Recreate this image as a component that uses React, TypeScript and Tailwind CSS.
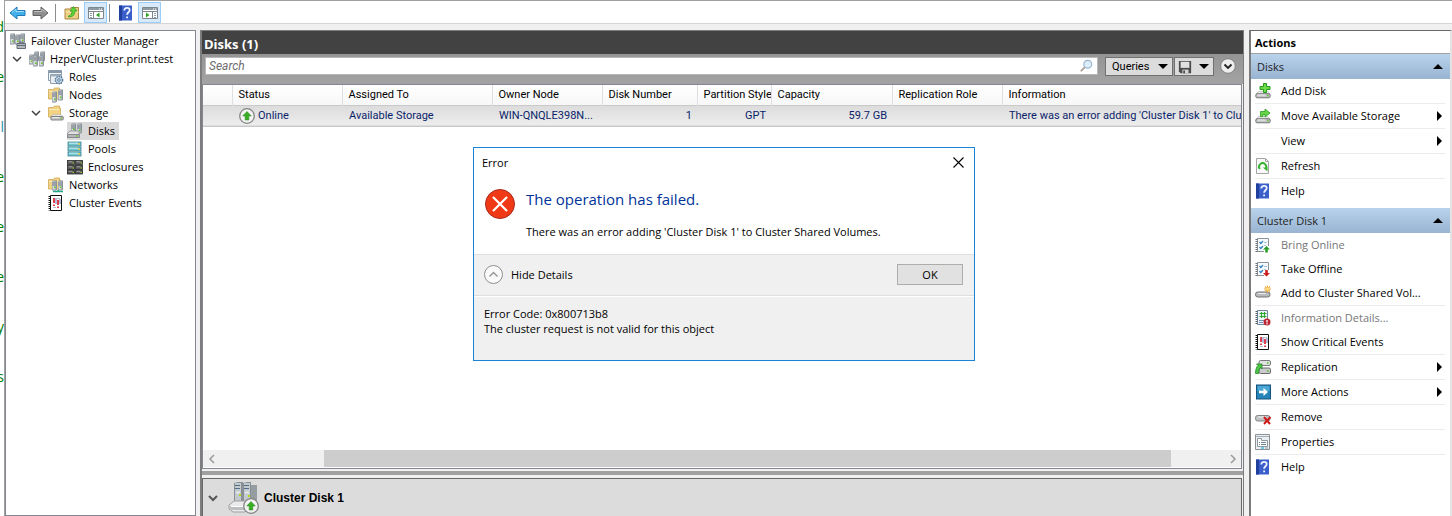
import { useState } from "react";
import type { ReactNode } from "react";
import clsx from "clsx";

/* ---------- icons ---------- */

interface IconProps {
  children: ReactNode;
  className?: string;
  viewBox?: string;
}

function Icon({ children, className = "w-4 h-4", viewBox = "0 0 16 16" }: IconProps) {
  return (
    <svg viewBox={viewBox} className={clsx("shrink-0", className)} aria-hidden="true" fill="none">
      {children}
    </svg>
  );
}

// one server tower, reused by most of the cluster icons
function Tower({ x, y, h = 10 }: { x: number; y: number; h?: number }) {
  return (
    <g transform={`translate(${x} ${y})`}>
      <path d={`M0 1.5 1 .5h4v${h}l-1 1H0z`} fill="#8b9299" />
      <path d={`M.5 1.5h3v${h - 1}h-3z`} fill="#d5dade" />
      <path d="M.5 3h3M.5 5h3" stroke="#5e6a75" />
      <path d={`M2 ${h - 2.5}h1.5v1.5H2z`} fill="#5fc71a" />
    </g>
  );
}

function Drive({ y = 8 }: { y?: number }) {
  return (
    <g transform={`translate(0 ${y})`}>
      <path d="M3.5.5h9L15 3H1z" fill="#e6e6e6" stroke="#b0b0b0" strokeWidth=".6" />
      <rect x=".8" y="2.8" width="14.4" height="4" rx="1.4" fill="#c2c4c5" stroke="#68696b" strokeWidth=".9" />
      <path d="M2.5 4h8" stroke="#f4f4f4" />
      <path d="M12 4h1.5v1.5H12z" fill="#63c927" />
    </g>
  );
}

function Folder() {
  return (
    <>
      <path d="M.5 2.5h5l1-1.5h5v2h1v9H.5z" fill="#f2d384" stroke="#cda852" strokeWidth=".8" />
      <path d="M1 4.5h10" stroke="#fbebbc" />
    </>
  );
}

const ServersIcon = () => (
  <Icon>
    <Tower x={0} y={0} />
    <Tower x={5} y={1} h={9} />
    <Tower x={10} y={0} h={9} />
    <path d="M7 10.5h8.5v5H7z" fill="#b4bac0" stroke="#626c75" />
    <path d="M10 10.5V9h3v1.5M7 12.5h8" stroke="#626c75" />
  </Icon>
);

const ClusterIcon = () => (
  <Icon>
    <Tower x={5} y={0} h={9} />
    <Tower x={11} y={0} h={9} />
    <Tower x={0} y={3} h={9} />
    <Tower x={4} y={4} />
    <Tower x={10} y={4} />
  </Icon>
);

const RolesIcon = () => (
  <Icon>
    <path d="M.5 1.5h13v10H.5z" fill="#f4f7fa" stroke="#8a9aa9" />
    <path d="M1 2h12v2H1z" fill="#8597a8" />
    <path d="M2.5 5.5h11v9h-11z" fill="#e9eef3" stroke="#93a2af" />
    <path d="M3 6h10v1.5H3z" fill="#a1b2c1" />
    <circle cx="11" cy="11" r="3.6" fill="#c9def0" stroke="#557895" strokeDasharray="1.5 .8" strokeWidth="1.5" />
    <circle cx="11" cy="11" r="1.3" fill="#fff" stroke="#557895" />
  </Icon>
);

const NodesIcon = () => (
  <Icon>
    <Folder />
    <Tower x={4} y={4} />
    <Tower x={10} y={2} />
  </Icon>
);

const StorageIcon = () => (
  <Icon>
    <Folder />
    <g transform="translate(2 2) scale(.88)">
      <Drive />
    </g>
  </Icon>
);

const DisksIcon = () => (
  <Icon>
    <Tower x={4} y={0} h={8} />
    <Tower x={10} y={0} h={9} />
    <path d="m3 8-3 3v3h9l3-3V8z" fill="#e1e1e1" stroke="#87898c" strokeWidth=".8" />
    <path d="M.5 11.5h12v3H.5z" fill="#b5b7b9" stroke="#77797b" strokeWidth=".8" />
    <path d="M9 12.5h2v1H9z" fill="#63c927" />
  </Icon>
);

const PoolsIcon = () => (
  <Icon>
    {[1, 6, 11].map((y) => (
      <g key={y}>
        <rect x="1" y={y} width="13" height="4" fill="#76c6d2" stroke="#39838e" strokeWidth=".8" />
        <path d={`M2 ${y + 1.2}h9`} stroke="#c6f0f5" />
        <path d={`M12 ${y + 1}v2`} stroke="#f5d33b" strokeWidth="1.4" />
      </g>
    ))}
  </Icon>
);

const EnclosuresIcon = () => (
  <Icon>
    {[1.5, 6.5, 11].map((y) =>
      [0.5, 8.5].map((x) => (
        <g key={`${x}-${y}`}>
          <rect x={x} y={y} width="7" height="4" fill="#575757" stroke="#292929" strokeWidth=".8" />
          <path d={`M${x + 1} ${y + 1.3}h4`} stroke="#b9b9b9" strokeWidth=".8" />
          <path d={`M${x + 5} ${y + 2}h1.5v1H${x + 5}z`} fill="#93d11f" />
        </g>
      ))
    )}
  </Icon>
);

const NetworksIcon = () => (
  <Icon>
    <Folder />
    <Tower x={4} y={3} h={9} />
    <Tower x={10} y={3} h={9} />
    <path d="M5 14.5h10M10 13v2" stroke="#22a886" strokeWidth="1.5" />
  </Icon>
);

const EventsIcon = () => (
  <Icon>
    <path d="M2.5.5h11v15h-11z" fill="#fff" stroke="#111" />
    <path d="M1.5 1v14.5" stroke="#111" strokeWidth="2" strokeDasharray="1 1" />
    <path d="M6 3v5M6 9.5V11" stroke="#d81e2d" strokeWidth="1.7" />
    <path d="M10 5v5M10 11.5V13" stroke="#d81e2d" strokeWidth="1.7" />
    <path d="M8 3v6M12 4v5" stroke="#4754a4" strokeWidth=".8" />
    <path d="M5 12.5h3M9 3.5h3" stroke="#9a9fb5" strokeWidth=".7" />
  </Icon>
);

const AddDiskIcon = () => (
  <Icon>
    <Drive />
    <path d="M8.5.5h3v3H15v3h-3.5v3h-3v-3H5v-3h3.5z" fill="#6bdb4c" stroke="#219b18" />
  </Icon>
);

const MoveIcon = () => (
  <Icon>
    <Drive />
    <path d="M5.5 8.5v-5H10V1l5 4-5 4V6.5H8v2z" fill="#67d44a" stroke="#2a9d20" strokeWidth=".8" />
  </Icon>
);

const RefreshIcon = () => (
  <Icon>
    <path d="M1.5.5h9l3 3v12h-12z" fill="#fafafa" stroke="#a4a4a4" />
    <path d="M10.5.5v3h3" stroke="#a4a4a4" />
    <path d="M4.8 11a3.6 3.6 0 1 1 5.7 0" stroke="#33b12c" strokeWidth="1.9" />
    <path d="M8 9.5h4.5v4z" fill="#33b12c" />
  </Icon>
);

const HelpIcon = () => (
  <Icon>
    <path d="M1 .5h13v15H1z" fill="#3a5fcb" />
    <path d="M1 .5h3v15H1z" fill="#213f9c" />
    <path d="M6.300 5.400c0-3.600 5.400-3.300 5.400-.3 0 2.100-2.600 2.200-2.600 4.600" stroke="#eef3ff" strokeWidth="1.8" />
    <path d="M8.200 11.500H10v1.800H8.200z" fill="#eef3ff" />
  </Icon>
);

function Checklist() {
  return (
    <>
      <path d="M2.5 1.5h11v13h-11z" fill="#f7fafc" stroke="#8c949b" />
      <path d="M1.5 2v13" stroke="#666c72" strokeWidth="2" strokeDasharray="1 1" />
      <path d="m4.5 5 1.3 1.5L8 4M4.5 10l1.3 1.5L8 9" stroke="#2e7dbd" strokeWidth="1.2" />
      <path d="M9 5.5h3M9 8.5h2" stroke="#a6c5db" />
    </>
  );
}

const BringOnlineIcon = () => (
  <Icon>
    <Checklist />
    <path d="M9 9h7v7H9z" fill="#fff" />
    <path d="m11.5 9 3.5 3.500h-2.200v3h-2.600v-3H8z" fill="#2c9c28" />
  </Icon>
);

const TakeOfflineIcon = () => (
  <Icon>
    <Checklist />
    <path d="M9 9h7v7H9z" fill="#fff" />
    <path d="M11.500 15.500 8 12h2.200V9h2.600v3H15z" fill="#cf2020" />
  </Icon>
);

const SharedVolumeIcon = () => (
  <Icon>
    <rect x=".5" y="7" width="14.5" height="5" rx="2.2" fill="#b8babc" stroke="#717375" />
    <path d="M3 8.5h8" stroke="#ededed" />
    <path d="M12.5.5v7M9 4h7M10 1.5l5 5M15 1.5l-5 5" stroke="#eba73d" strokeWidth="1.1" />
    <circle cx="12.5" cy="4" r="1.7" fill="#ffdc7b" />
  </Icon>
);

const InfoDetailsIcon = () => (
  <Icon>
    <path d="M2.5.5h10v14h-10z" fill="#eef4fa" stroke="#6c879f" />
    <path d="M1.5 1v14" stroke="#585d62" strokeWidth="2" strokeDasharray="1 1" />
    <path d="M6.5 2v6M9.5 2v6M4.5 3.5h7M4.5 6.5h7" stroke="#2fa62f" strokeWidth="1.2" />
    <path d="M4 10.5h5M4 12.5h4" stroke="#6e91bb" />
    <circle cx="12" cy="12" r="3.5" fill="#bf2634" />
    <path d="M12 10v2.5M12 13.3v1.2" stroke="#fff" strokeWidth="1.3" />
  </Icon>
);

const ReplicationIcon = () => (
  <Icon>
    <rect x="4" y="1.5" width="11.5" height="5" rx="1.5" fill="#dfe1e2" stroke="#797b7d" />
    <rect x="4" y="9" width="11.5" height="5.5" rx="1.5" fill="#c8cacc" stroke="#696b6d" />
    <path d="M12 4h1.5M12 12h1.5" stroke="#4ebd20" strokeWidth="1.5" />
    <path d="M.5 14.5C.5 10.500 1.500 8 3 6.500L1.500 5H7v5L5.500 8.500C4 10 3.500 11.500 3.500 14.500z" fill="#4cc845" stroke="#23882a" strokeWidth=".8" />
  </Icon>
);

const MoreActionsIcon = () => (
  <Icon>
    <rect x="1.5" y="1" width="14" height="14" fill="#2583b8" stroke="#14557f" />
    <path d="M2.5 2h12v5h-12z" fill="#4ba7d5" />
    <path d="M4 6.700h4.500V4L13 8l-4.500 4V9.300H4z" fill="#fff" />
  </Icon>
);

const RemoveIcon = () => (
  <Icon>
    <rect x=".5" y="6.5" width="14.5" height="5.5" rx="2.2" fill="#c0c2c4" stroke="#818385" />
    <path d="M3 8h8" stroke="#f2f2f2" />
    <path d="m9 8 6 7M15.500 8 9 15" stroke="#d01919" strokeWidth="2" />
  </Icon>
);

const PropertiesIcon = () => (
  <Icon>
    <path d="M.5.5h14v15H.5z" fill="#eceff1" stroke="#8b9195" />
    <path d="M1 2.5h13" stroke="#a6adb3" />
    <path d="M2.5 4.5h4v2h6v6h-10z" fill="#fff" stroke="#8e99a2" />
    <path d="M4 8.5h1M6 8.5h5M4 10.5h1M6 10.5h5" stroke="#718596" />
    <path d="M6 14h3" stroke="#27bad8" strokeWidth="1.3" />
    <path d="M10 14h3" stroke="#949a9e" />
  </Icon>
);

function PaneIcon({ side }: { side: "left" | "right" }) {
  return (
    <Icon>
      <path d="M.5 2.5h15v11H.5z" fill="#fff" stroke="#7c868f" />
      <path d="M1 3h14v2H1z" fill="#8f9aa4" />
      <path d="M1 6.5h14" stroke="#7c868f" />
      <path d="M11 4h1M13 4h1" stroke="#fff" />
      {side === "left" ? (
        <>
          <path d="M5.5 7v7" stroke="#7c868f" />
          <path d="M2 8.5h2M2 10.5h2M2 12.5h2" stroke="#8ca0b3" />
          <path d="M11.5 7.5v5L8 10z" fill="#2ea424" />
        </>
      ) : (
        <>
          <path d="M10.5 7v7" stroke="#7c868f" />
          <path d="M12 8.5h2M12 10.5h2M12 12.5h2" stroke="#8ca0b3" />
          <path d="M4 7.5v5L7.5 10z" fill="#2ea424" />
        </>
      )}
    </Icon>
  );
}

const FolderUpIcon = () => (
  <Icon>
    <path d="M1 4h5l1-1.5h7.5V14H1z" fill="#efcf83" stroke="#ad8742" />
    <path d="M1.5 7h13" stroke="#f9e6af" />
    <path d="M4.500 11c2.500-.5 3.500-2.500 3.500-5H6l3.500-4.500L13 6h-2c0 4-2.500 6-6.500 6z" fill="#5fd438" stroke="#2a9323" strokeWidth=".7" />
  </Icon>
);

const BackIcon = () => (
  <Icon className="w-[17px] h-4" viewBox="0 0 17 16">
    <path d="M1 8 8 2v3.5h8v5H8V14z" fill="#43b0e9" stroke="#2179b8" />
    <path d="m3 7.5 4-3.300V6.500h8" stroke="#a2def8" />
  </Icon>
);

const ForwardIcon = () => (
  <Icon className="w-[17px] h-4" viewBox="0 0 17 16">
    <path d="M16 8 9 2v3.5H1v5h8V14z" fill="#8f8f8f" stroke="#626262" />
    <path d="M2 6.5h8V4.200l4 3.300" stroke="#bcbcbc" />
  </Icon>
);

function OnlineBadge() {
  return (
    <>
      <circle cx="8" cy="8" r="7.3" fill="#f3f3f3" stroke="#858585" strokeWidth="1.3" />
      <path d="m8 3.500 4.300 4.500H9.800v4H6.200V8H3.700z" fill="#38ae25" stroke="#258618" strokeWidth=".5" />
    </>
  );
}

function Chevron({ className = "" }: { className?: string }) {
  return (
    <svg viewBox="0 0 10 10" fill="none" aria-hidden="true" className={clsx("w-2.5 h-2.5 shrink-0", className)}>
      <path d="m1 3 4 4 4-4" stroke="currentColor" strokeWidth="1.5" />
    </svg>
  );
}

/* ---------- data ---------- */

interface Action {
  label: string;
  icon?: ReactNode;
  submenu?: boolean;
  disabled?: boolean;
  divider?: boolean;
}

const diskActions: Action[] = [
  { label: "Add Disk", icon: <AddDiskIcon />, divider: true },
  { label: "Move Available Storage", icon: <MoveIcon />, submenu: true, divider: true },
  { label: "View", submenu: true, divider: true },
  { label: "Refresh", icon: <RefreshIcon />, divider: true },
  { label: "Help", icon: <HelpIcon /> },
];

const clusterDiskActions: Action[] = [
  { label: "Bring Online", icon: <BringOnlineIcon />, disabled: true },
  { label: "Take Offline", icon: <TakeOfflineIcon /> },
  { label: "Add to Cluster Shared Vol...", icon: <SharedVolumeIcon />, divider: true },
  { label: "Information Details...", icon: <InfoDetailsIcon />, disabled: true },
  { label: "Show Critical Events", icon: <EventsIcon />, divider: true },
  { label: "Replication", icon: <ReplicationIcon />, submenu: true, divider: true },
  { label: "More Actions", icon: <MoreActionsIcon />, submenu: true, divider: true },
  { label: "Remove", icon: <RemoveIcon />, divider: true },
  { label: "Properties", icon: <PropertiesIcon />, divider: true },
  { label: "Help", icon: <HelpIcon /> },
];

const columns = [
  { label: "", width: "w-[29px]" },
  { label: "Status", width: "w-[110px]" },
  { label: "Assigned To", width: "w-[150px]" },
  { label: "Owner Node", width: "w-[110px]" },
  { label: "Disk Number", width: "w-[95px]" },
  { label: "Partition Style", width: "w-[74px]" },
  { label: "Capacity", width: "w-[121px]" },
  { label: "Replication Role", width: "w-[110px]" },
  { label: "Information", width: "" },
];

const editorLetters = ["d", "e", "l", "e", "e", "e", "y", "s"];

/* ---------- parts ---------- */

function Toolbar() {
  return (
    <div className="h-6 flex items-center bg-white border-y border-t-[#a0a0a0] border-b-[#d5d5d5] pl-1 pt-px">
      <button aria-label="Back">
        <BackIcon />
      </button>
      <button aria-label="Forward" className="ml-1.5">
        <ForwardIcon />
      </button>
      <span className="w-px h-[18px] bg-[#8d8d8d] ml-1.5" />
      <button aria-label="Up one level" className="ml-2">
        <FolderUpIcon />
      </button>
      <button
        aria-label="Show console tree"
        className="ml-1 w-[23px] h-[21px] flex items-center justify-center bg-[#d8eaf9] border border-[#99cdf8]"
      >
        <PaneIcon side="left" />
      </button>
      <span className="w-px h-[18px] bg-[#8d8d8d] ml-0.5" />
      <button aria-label="Help" className="ml-2">
        <HelpIcon />
      </button>
      <button
        aria-label="Show action pane"
        className="ml-1 w-[23px] h-[21px] flex items-center justify-center bg-[#d8eaf9] border border-[#99cdf8]"
      >
        <PaneIcon side="right" />
      </button>
    </div>
  );
}

interface TreeItemProps {
  label: string;
  icon: ReactNode;
  expanded?: boolean;
  selected?: boolean;
  indent: string;
}

function TreeItem({ label, icon, expanded, selected, indent }: TreeItemProps) {
  return (
    <li className={clsx("flex items-center h-[18px]", indent)}>
      <span className="w-[17px] shrink-0 text-[#404040]">{expanded && <Chevron />}</span>
      <button
        className={clsx("flex items-center gap-[5px] h-[18px] pr-1 whitespace-nowrap", selected && "bg-[#d9d9d9]")}
      >
        {icon}
        {label}
      </button>
    </li>
  );
}

function ConsoleTree() {
  return (
    <nav aria-label="Console tree" className="w-[191px] shrink-0 bg-white border border-[#828790] pt-px">
      <ul>
        <li className="flex items-center h-[18px] pl-1">
          <button className="flex items-center gap-[5px] whitespace-nowrap">
            <ServersIcon />
            Failover Cluster Manager
          </button>
        </li>
        <TreeItem indent="pl-1.5" expanded icon={<ClusterIcon />} label="HzperVCluster.print.test" />
        <TreeItem indent="pl-[25px]" icon={<RolesIcon />} label="Roles" />
        <TreeItem indent="pl-[25px]" icon={<NodesIcon />} label="Nodes" />
        <TreeItem indent="pl-[25px]" expanded icon={<StorageIcon />} label="Storage" />
        <TreeItem indent="pl-11" selected icon={<DisksIcon />} label="Disks" />
        <TreeItem indent="pl-11" icon={<PoolsIcon />} label="Pools" />
        <TreeItem indent="pl-11" icon={<EnclosuresIcon />} label="Enclosures" />
        <TreeItem indent="pl-[25px]" icon={<NetworksIcon />} label="Networks" />
        <TreeItem indent="pl-[25px]" icon={<EventsIcon />} label="Cluster Events" />
      </ul>
    </nav>
  );
}

function DownTriangle() {
  return (
    <svg viewBox="0 0 10 5" className="w-2.5 h-[5px]" aria-hidden="true">
      <path d="M0 0h10L5 5z" fill="#000" />
    </svg>
  );
}

function SearchBar() {
  const [query, setQuery] = useState("");

  return (
    <div className="h-[30px] flex items-start pt-[3px] pl-[3px] pr-[7px] bg-gradient-to-b from-[#949494] to-[#a3a3a3]">
      <label className="flex-1 h-[18px] flex items-center bg-white border border-[#b8b8b8] pr-1">
        <input
          type="text"
          aria-label="Search"
          placeholder="Search"
          value={query}
          onChange={(e) => setQuery(e.target.value)}
          className="flex-1 min-w-0 h-4 px-[3px] text-[12px] outline-none placeholder:italic placeholder:text-[#6d6d6d]"
        />
        <Icon className="w-3.5 h-3.5">
          <path d="m2 14 5-5" stroke="#a39b91" strokeWidth="2" />
          <circle cx="10" cy="6" r="4.5" fill="#dceefa" stroke="#98b3cd" strokeWidth="1.3" />
        </Icon>
      </label>
      <button className="ml-[7px] w-[68px] h-[19px] flex items-center justify-between pl-1.5 pr-1 bg-[#dcdcdc] border border-[#707070]">
        Queries
        <DownTriangle />
      </button>
      <button
        aria-label="Save query"
        className="ml-px w-10 h-[19px] flex items-center justify-between pl-[3px] pr-1 bg-[#dcdcdc] border border-[#707070]"
      >
        <Icon className="w-3.5 h-3.5">
          <path d="M1 1h14v14H3l-2-2z" fill="#4c4c4c" />
          <path d="M3 2h10v7H3z" fill="#dfe1e3" />
          <path d="M5 11h7v4H5z" fill="#d6d6d6" />
          <path d="M6 12h2v3H6z" fill="#4c4c4c" />
        </Icon>
        <DownTriangle />
      </button>
      <button aria-label="Expand query" className="ml-1.5 mt-px">
        <Icon>
          <circle cx="8" cy="8" r="7.3" fill="#eee" stroke="#828282" />
          <path d="M4.500 6.500 8 10l3.500-3.500" stroke="#222" strokeWidth="1.9" />
        </Icon>
      </button>
    </div>
  );
}

function DiskTable() {
  const cell = "h-[21px] p-0 pl-[7px] overflow-hidden";
  const numberCell = "h-[21px] p-0 pr-[5px] text-right";

  return (
    <table className="w-full table-fixed border-collapse whitespace-nowrap">
      <colgroup>
        {columns.map((column, i) => (
          <col key={i} className={column.width} />
        ))}
      </colgroup>
      <thead>
        <tr className="h-5 bg-gradient-to-b from-white to-[#f7f7f8]">
          {columns.map((column, i) => (
            <th
              key={i}
              className="h-5 p-0 pl-1.5 text-left font-normal overflow-hidden border-r border-[#dedfe1] last:border-r-0"
            >
              {column.label}
            </th>
          ))}
        </tr>
      </thead>
      <tbody>
        <tr className="bg-gradient-to-b from-[#dcdcdc] to-[#ededed] border-y border-[#c9c9c9] text-[#0a246a]">
          <td className={cell} />
          <td className={cell}>
            <span className="flex items-center gap-[3px]">
              <Icon>
                <OnlineBadge />
              </Icon>
              Online
            </span>
          </td>
          <td className={cell}>Available Storage</td>
          <td className={cell}>WIN-QNQLE398N...</td>
          <td className={numberCell}>1</td>
          <td className={numberCell}>GPT</td>
          <td className={numberCell}>59.7 GB</td>
          <td className={cell} />
          <td className={cell}>There was an error adding 'Cluster Disk 1' to Cluster Shared Volumes.</td>
        </tr>
      </tbody>
    </table>
  );
}

function DisksPane() {
  return (
    <main className="flex-1 min-w-0 flex flex-col border-l-2 border-t border-r border-[#7d7d7d] bg-[#f0f0f0] font-[Roboto,sans-serif]">
      <h1 className="h-[23px] flex items-center pl-0.5 pt-0.5 bg-[#424242] text-white font-bold text-[13px] font-['Open_Sans',sans-serif]">
        Disks (1)
      </h1>
      <SearchBar />
      <section className="flex-1 flex flex-col bg-white border border-[#828790] mr-px pb-px">
        <DiskTable />
        {/* horizontal scrollbar */}
        <div className="mt-auto h-[17px] flex bg-[#f0f0f0] text-[#9a9a9a]">
          <button aria-label="Scroll left" className="w-[17px] flex items-center justify-center">
            <Chevron className="rotate-90" />
          </button>
          <div className="flex-1 flex">
            <span className="w-[104px]" />
            <span className="flex-1 bg-[#cdcdcd]" />
            <span className="w-[53px]" />
          </div>
          <button aria-label="Scroll right" className="w-[17px] flex items-center justify-center">
            <Chevron className="-rotate-90" />
          </button>
        </div>
      </section>
      <div className="h-1 mt-0.5 mb-[3px] bg-[#a0a0a0]" />
      <section className="h-[38px] flex items-center mr-px pl-[5px] bg-[#dcdcdc] border border-b-0 border-[#696969]">
        <Chevron className="text-[#555] [&_path]:stroke-2" />
        <Icon className="ml-2.5 w-8 h-8" viewBox="0 0 32 32">
          <path d="m6 1 4-1h5v22H6zM15 1l4-1h4v23h-8z" fill="#899096" />
          <path d="M7 1h6v20H7zM16 1h6v20h-6z" fill="#c3cacf" />
          <path d="M23 3h6v20h-6z" fill="#969da1" />
          <path d="M7 3.5h5M7 6.5h5M16 3.5h5M16 6.5h5" stroke="#526e82" />
          <path d="M8 10.5h4M17 10.5h4" stroke="#e3e7e9" strokeWidth="2" />
          <path d="M11 12h2v2h-2zM20 13h2v2h-2z" fill="#b6db19" />
          <path d="m6 19-5 4v4l4 3h12l5-5v-6z" fill="#eaeaea" stroke="#9d9fa1" />
          <path d="M1 24h17v4H3z" fill="#bcbec0" />
          <path d="M3 24.5h14" stroke="#fff" />
          <g transform="translate(15 16)">
            <OnlineBadge />
          </g>
        </Icon>
        <h2 className="ml-1 text-[12px] font-bold font-['Liberation_Sans',sans-serif]">Cluster Disk 1</h2>
      </section>
    </main>
  );
}

function ActionGroup({ title, actions }: { title: string; actions: Action[] }) {
  return (
    <section className="mb-[5px]">
      <button className="w-full h-[25px] flex items-center justify-between pl-1.5 pr-[7px] bg-gradient-to-b from-[#bad3ec] to-[#98b4d2] text-[#1e1e1e]">
        {title}
        <svg viewBox="0 0 10 5" className="w-2.5 h-[5px]" aria-hidden="true">
          <path d="M0 5h10L5 0z" fill="#000" />
        </svg>
      </button>
      <ul className="pl-1 pr-[5px]">
        {actions.map((action) => (
          <li key={action.label} className={clsx(action.divider && "border-b border-[#ececec]")}>
            <button
              disabled={action.disabled}
              className="w-full h-6 flex items-center gap-2.5 pr-[3px] text-left whitespace-nowrap disabled:text-[#777]"
            >
              <span className="w-4 shrink-0">{action.icon}</span>
              <span className="flex-1">{action.label}</span>
              {action.submenu && (
                <svg viewBox="0 0 5 10" className="w-[5px] h-2.5" aria-hidden="true">
                  <path d="M0 0v10l5-5z" fill="#000" />
                </svg>
              )}
            </button>
          </li>
        ))}
      </ul>
    </section>
  );
}

function ActionsPane() {
  return (
    <aside className="w-[203px] shrink-0 bg-white border-l-2 border-t border-r-2 border-l-[#7a7a7a] border-t-[#696969] border-r-[#e3e3e3]">
      <h2 className="h-[23px] flex items-center pl-1 pt-px font-bold border-b border-[#a0a0a0]">Actions</h2>
      <ActionGroup title="Disks" actions={diskActions} />
      <ActionGroup title="Cluster Disk 1" actions={clusterDiskActions} />
    </aside>
  );
}

function ErrorDialog() {
  return (
    <div
      role="dialog"
      aria-labelledby="error-title"
      className="absolute left-[473px] top-[147px] w-[502px] flex flex-col bg-white border border-[#1883d7]"
    >
      <div className="h-[30px] flex items-center justify-between pl-2 pr-2.5 pb-px">
        <span id="error-title">Error</span>
        <button aria-label="Close">
          <svg viewBox="0 0 11 11" className="w-[11px] h-[11px]" aria-hidden="true">
            <path d="m.5.5 10 10M10.5.5l-10 10" stroke="#000" strokeWidth="1.1" />
          </svg>
        </button>
      </div>
      <div className="h-[76px] flex pl-[11px] pt-[11px] gap-[11px]">
        <Icon className="w-[30px] h-[30px]" viewBox="0 0 30 30">
          <circle cx="15" cy="15" r="14.5" fill="#f03a17" stroke="#a62a18" />
          <path d="m8 8 14 14M22 8 8 22" stroke="#fff" strokeWidth="2.2" />
        </Icon>
        <div>
          <h2 className="text-[15px] leading-5 text-[#003399]">The operation has failed.</h2>
          <p className="mt-3 leading-[22px]">There was an error adding 'Cluster Disk 1' to Cluster Shared Volumes.</p>
        </div>
      </div>
      <div className="h-[41px] flex items-center justify-between pl-2.5 pr-[11px] pb-px bg-[#f0f0f0] border-t border-[#dfdfdf]">
        <button className="flex items-center gap-2">
          <Icon className="w-[19px] h-[19px]" viewBox="0 0 19 19">
            <circle cx="9.5" cy="9.5" r="9" fill="#fafafa" stroke="#8f8f8f" />
            <path d="m5.5 11.5 4-4 4 4" stroke="#999" strokeWidth="1.5" />
          </Icon>
          Hide Details
        </button>
        <button className="w-[66px] h-[21px] bg-[#e1e1e1] border border-[#adadad]">OK</button>
      </div>
      <div className="h-[65px] bg-[#f0f0f0] border-t border-[#dfdfdf]">
        <div className="border-t border-white pt-[9px] pl-2.5 leading-[15px]">
          <p>Error Code: 0x800713b8</p>
          <p>The cluster request is not valid for this object</p>
        </div>
      </div>
    </div>
  );
}

export default function App() {
  return (
    <div className="relative min-h-screen flex overflow-hidden bg-[#f0f0f0] text-black text-[11px] leading-4 font-['Open_Sans',sans-serif]">
      {/* edge of the editor window behind the console */}
      <div className="w-[5px] shrink-0 flex flex-col items-end overflow-hidden bg-white border-r border-[#a0a0a0] pt-1 text-[14px] text-[#008000]">
        {editorLetters.map((letter, i) => (
          <span key={i} className={clsx("h-[50px] leading-[46px]", letter === "l" && "text-[#2b91af]")}>
            {letter}
          </span>
        ))}
      </div>
      <div className="flex-1 min-w-0 flex flex-col">
        <Toolbar />
        <div className="flex-1 flex pt-1.5">
          <ConsoleTree />
          <div className="flex-1 min-w-0 flex ml-1 mr-[5px]">
            <DisksPane />
          </div>
          <ActionsPane />
        </div>
      </div>
      <ErrorDialog />
    </div>
  );
}
